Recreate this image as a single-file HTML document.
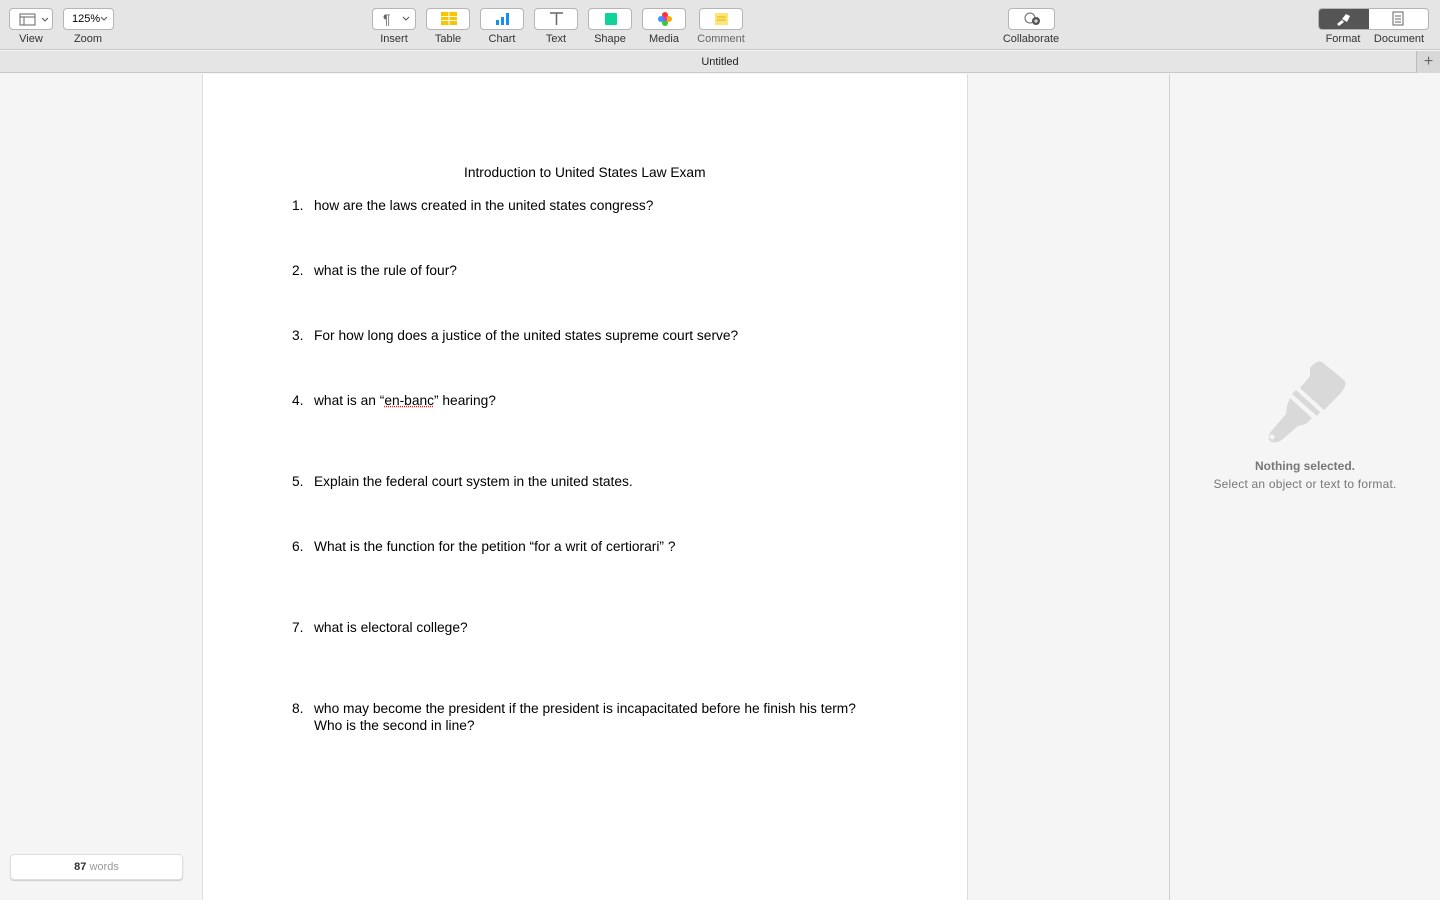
<!DOCTYPE html>
<html><head><meta charset="utf-8"><style>
*{margin:0;padding:0;box-sizing:border-box}
body{width:1440px;height:900px;overflow:hidden;background:#f5f5f5;font-family:"Liberation Sans",sans-serif;position:relative}
.tb{position:absolute;left:0;top:0;width:1440px;height:50px;background:#e5e5e5;border-bottom:1px solid #c8c8c8}
.btn{position:absolute;top:8px;height:22px;background:#fff;border:1px solid #b5b5b5;border-radius:4px}
.lbl{position:absolute;top:33px;font-size:11px;color:#333;text-align:center;width:70px}
.title{position:absolute;left:0;top:51px;width:1440px;height:22px;background:#e5e5e5;border-bottom:1px solid #c8c8c8;font-size:11px;color:#222;text-align:center;line-height:22px}
.page{position:absolute;left:202px;top:74px;width:766px;height:826px;background:#fff;border-left:1px solid #ddd;border-right:1px solid #ddd}
.side{position:absolute;left:1169px;top:74px;width:271px;height:826px;background:#f5f5f5;border-left:1px solid #d0d0d0}
.t{position:absolute;font-size:13.75px;color:#000;white-space:nowrap;line-height:17px}
.n{position:absolute;font-size:13.75px;color:#000;line-height:17px}
</style></head><body>
<div class="tb">
 <div class="btn" style="left:9px;width:44px"><svg width="44" height="20"><rect x="10" y="5" width="15" height="11" fill="none" stroke="#666"/><line x1="10" y1="8" x2="25" y2="8" stroke="#666"/><line x1="14" y1="8" x2="14" y2="16" stroke="#666"/><path d="M32 9l3 3 3-3" fill="none" stroke="#555"/></svg></div>
 <div class="lbl" style="left:-4px">View</div>
 <div class="btn" style="left:63px;width:51px;font-size:11px;line-height:20px;padding-left:8px">125%<svg style="position:absolute;right:5px;top:7px" width="8" height="6"><path d="M1 1l3 3 3-3" fill="none" stroke="#555"/></svg></div>
 <div class="lbl" style="left:53px">Zoom</div>
 <div class="btn" style="left:372px;width:44px;font-size:14px;color:#666;line-height:20px;padding-left:10px">¶<svg style="position:absolute;right:5px;top:7px" width="8" height="6"><path d="M1 1l3 3 3-3" fill="none" stroke="#555"/></svg></div>
 <div class="lbl" style="left:359px">Insert</div>
 <div class="btn" style="left:426px;width:44px"><svg width="44" height="20"><rect x="14" y="3" width="16" height="13" fill="#f7c600"/><path d="M14 7.5h16M14 11.5h16M22 3v13" stroke="#fff"/></svg></div>
 <div class="lbl" style="left:413px">Table</div>
 <div class="btn" style="left:480px;width:44px"><svg width="44" height="20"><rect x="15" y="11" width="3" height="5" fill="#1b8cf0"/><rect x="20" y="8" width="3" height="8" fill="#1b8cf0"/><rect x="25" y="4" width="3" height="12" fill="#1b8cf0"/></svg></div>
 <div class="lbl" style="left:467px">Chart</div>
 <div class="btn" style="left:534px;width:44px"><svg width="44" height="20"><path d="M15 4h13M21.5 4v12" stroke="#666" stroke-width="1.5"/></svg></div>
 <div class="lbl" style="left:521px">Text</div>
 <div class="btn" style="left:588px;width:44px"><svg width="44" height="20"><rect x="16" y="4" width="12" height="12" rx="1" fill="#0fd39a"/></svg></div>
 <div class="lbl" style="left:575px">Shape</div>
 <div class="btn" style="left:642px;width:44px"><svg width="44" height="20"><circle cx="22" cy="6" r="3" fill="#f33"/><circle cx="26" cy="10" r="3" fill="#fa0"/><circle cx="22" cy="14" r="3" fill="#3c3"/><circle cx="18" cy="10" r="3" fill="#39f"/><circle cx="22" cy="10" r="2" fill="#c3f"/></svg></div>
 <div class="lbl" style="left:629px">Media</div>
 <div class="btn" style="left:699px;width:44px"><svg width="44" height="20"><rect x="15" y="4" width="13" height="12" fill="#fde57a"/><path d="M17 8h9M17 11h9" stroke="#e0b800"/></svg></div>
 <div class="lbl" style="left:686px;color:#666">Comment</div>
 <div class="btn" style="left:1008px;width:47px"><svg width="47" height="20"><circle cx="21" cy="9" r="5" fill="none" stroke="#666"/><circle cx="27" cy="12" r="4" fill="#555"/><path d="M25 12h4M27 10v4" stroke="#fff"/></svg></div>
 <div class="lbl" style="left:996px">Collaborate</div>
 <div class="btn" style="left:1318px;width:111px;overflow:hidden"><div style="position:absolute;left:0;top:0;width:50px;height:20px;background:#555"></div><svg style="position:absolute;left:0;top:0" width="111" height="20"><path d="M18 15l5-4 2 2-5 4zM23 10l4-5 4 2-3 6z" fill="#fff"/><rect x="74" y="3" width="10" height="13" fill="none" stroke="#666"/><path d="M76 7h6M76 10h6M76 13h6" stroke="#666"/></svg></div>
 <div class="lbl" style="left:1308px">Format</div>
 <div class="lbl" style="left:1364px">Document</div>
</div>
<div class="title">Untitled<div style="position:absolute;right:0;top:0;width:24px;height:22px;background:#d8d8d8;border-left:1px solid #bbb;color:#666;font-size:16px;line-height:21px">+</div></div>
<div class="page"></div>
<div class="t" style="left:464px;top:164px">Introduction to United States Law Exam</div>
<div class="n" style="left:292px;top:197px">1.</div><div class="t" style="left:314px;top:197px">how are the laws created in the united states congress?</div>
<div class="n" style="left:292px;top:262px">2.</div><div class="t" style="left:314px;top:262px">what is the rule of four?</div>
<div class="n" style="left:292px;top:327px">3.</div><div class="t" style="left:314px;top:327px">For how long does a justice of the united states supreme court serve?</div>
<div class="n" style="left:292px;top:392px">4.</div><div class="t" style="left:314px;top:392px">what is an “<span style="text-decoration:underline dotted #e02020">en-banc</span>” hearing?</div>
<div class="n" style="left:292px;top:473px">5.</div><div class="t" style="left:314px;top:473px">Explain the federal court system in the united states.</div>
<div class="n" style="left:292px;top:538px">6.</div><div class="t" style="left:314px;top:538px">What is the function for the petition “for a writ of certiorari” ?</div>
<div class="n" style="left:292px;top:619px">7.</div><div class="t" style="left:314px;top:619px">what is electoral college?</div>
<div class="n" style="left:292px;top:700px">8.</div><div class="t" style="left:314px;top:700px">who may become the president if the president is incapacitated before he finish his term?<br>Who is the second in line?</div>
<div class="side">
 <svg style="position:absolute;left:94px;top:286px" width="86" height="84" viewBox="0 0 86 84"><path d="M46 8c4-5 9-8 12-6l22 18c3 3 1 8-4 14l-16 16-24-22z" fill="#d9d9d9"/><path d="M32 30l24 22-3 4-25-22z" fill="#d9d9d9"/><path d="M26 38l22 20-6 6-8 2-14 12c-4 4-10 6-14 3-3-4 0-9 4-13l12-14 1-8z" fill="#d9d9d9"/><path d="M40 10l6-2 0 8-10 12z" fill="#f5f5f5"/><circle cx="8" cy="77" r="2.5" fill="#f5f5f5"/></svg>
 <div style="position:absolute;left:0;top:385px;width:270px;text-align:center;font-size:12px;font-weight:bold;color:#777">Nothing selected.</div>
 <div style="position:absolute;left:0;top:403px;width:270px;text-align:center;font-size:12px;color:#777;letter-spacing:0.2px">Select an object or text to format.</div>
</div>
<div style="position:absolute;left:10px;top:854px;width:173px;height:26px;background:#fff;border:1px solid #ddd;border-radius:4px;box-shadow:0 1px 1px #ccc;text-align:center;font-size:11px;line-height:24px;color:#999"><b style="color:#333">87</b> words</div>
</body></html>
